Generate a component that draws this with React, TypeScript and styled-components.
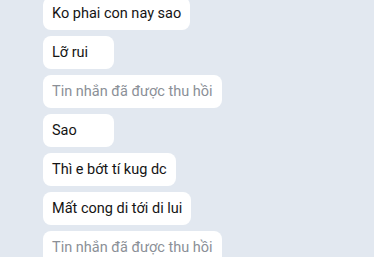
import React from 'react'
import styled, { createGlobalStyle } from 'styled-components'

const GlobalStyle = createGlobalStyle`
    html, body {
        margin: 0;
        padding: 0;
        background: #e2e8f0;
    }
    body {
        font-family: Roboto, "Noto Sans", sans-serif;
        overflow: hidden;
    }
`

interface IMessage {
    text: string
    recalled?: boolean
}

const messages: IMessage[] = [
    { text: 'Ko phai con nay sao' },
    { text: 'Lỡ rui' },
    { text: 'Tin nhắn đã được thu hồi', recalled: true },
    { text: 'Sao' },
    { text: 'Thì e bớt tí kug dc' },
    { text: 'Mất cong di tới di lui' },
    { text: 'Tin nhắn đã được thu hồi', recalled: true },
]

const Screen = styled.div`
    width: 374px;
    height: 257px;
    overflow: hidden;
    background: #e2e8f0;
`

const MessageList = styled.div`
    display: flex;
    flex-direction: column;
    align-items: flex-start;
    gap: 6px;
    margin-top: -3px;
    padding-left: 43px;
`

const Bubble = styled.div<{ $recalled?: boolean }>`
    box-sizing: border-box;
    height: 33px;
    min-width: 71px;
    display: flex;
    align-items: center;
    padding: 0 9px;
    border-radius: 8px;
    background: #ffffff;
    font-size: 14.5px;
    color: ${p => p.$recalled ? '#8b9097' : '#141414'};
    white-space: nowrap;
`

export default function App() {
    return (
        <Screen>
            <GlobalStyle />
            <MessageList>
                {messages.map((m, idx) => (
                    <Bubble key={idx} $recalled={m.recalled}>{m.text}</Bubble>
                ))}
            </MessageList>
        </Screen>
    )
}
